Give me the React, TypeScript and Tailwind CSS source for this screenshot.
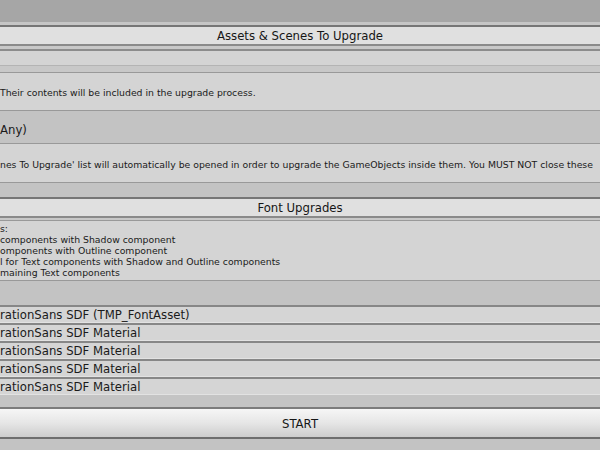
import React from "react";

const materials: string[] = [
  "rationSans SDF (TMP_FontAsset)",
  "rationSans SDF Material",
  "rationSans SDF Material",
  "rationSans SDF Material",
  "rationSans SDF Material",
];

const fontNotes: string[] = [
  "s:",
  "components with Shadow component",
  "omponents with Outline component",
  "l for Text components with Shadow and Outline components",
  "maining Text components",
];

const Header: React.FC<{ title: string }> = ({ title }) => (
  <div className="h-[21px] border-t-2 border-b-2 border-t-[#767676] border-b-[#8a8a8a] bg-[#e0e0e0] flex items-center justify-center pt-[2px] text-[11.7px] text-[#161616]">
    {title}
  </div>
);

const App: React.FC = () => {
  return (
    <div className="w-[600px] h-[450px] overflow-hidden bg-[#c3c3c3] font-['DejaVu_Sans',sans-serif] text-[#1a1a1a] whitespace-nowrap">
      {/* window top */}
      <div className="h-[22px] bg-[#a6a6a6]" />
      <div className="h-[3px] bg-[#c6c6c6]" />

      <Header title="Assets & Scenes To Upgrade" />
      <div className="h-[3px] bg-[#c8c8c8]" />

      {/* empty list field */}
      <div className="h-[17px] border-t-2 border-b border-t-[#8c8c8c] border-b-[#b4b4b4] bg-[#d4d4d4]" />
      <div className="h-[6px] bg-[#c8c8c8]" />

      {/* help box */}
      <div className="h-[39px] border-y border-[#999999] bg-[#d4d4d4] flex items-center text-[9.3px] pt-[3px]">
        <span>Their contents will be included in the upgrade process.</span>
      </div>

      {/* dropdown value */}
      <div className="h-[33px] border-b border-[#999999] bg-[#c3c3c3] flex items-center text-[11.7px] pt-[7px]">
        <span>Any)</span>
      </div>

      <div className="h-[39px] border-b border-[#999999] bg-[#d4d4d4] flex items-center text-[9.3px] pt-[3px]">
        <span>
          nes To Upgrade' list will automatically be opened in order to upgrade the GameObjects inside them. You MUST NOT close these
        </span>
      </div>

      <div className="h-[14px]" />

      <Header title="Font Upgrades" />
      <div className="h-[2px] bg-[#c8c8c8]" />

      {/* font upgrade notes */}
      <div className="h-[61px] border-y border-[#999999] bg-[#d4d4d4] pt-[2px] text-[9.3px] leading-[11px]">
        {fontNotes.map((line, idx) => (
          <div key={idx}>{line}</div>
        ))}
      </div>

      <div className="h-[24px]" />

      {/* material list */}
      <div>
        {materials.map((name, idx) => (
          <div
            key={idx}
            className="h-[18px] border-t-2 border-b border-t-[#878787] border-b-[#e2e2e2] bg-[#d5d5d5] flex items-center pt-[2px] text-[11.7px]"
          >
            {name}
          </div>
        ))}
      </div>

      <div className="h-[12px] bg-[#c4c4c4]" />

      {/* start button */}
      <div className="h-[32px] border-t-2 border-b-2 border-t-[#7c7c7c] border-b-[#6e6e6e] bg-gradient-to-b from-[#f6f6f6] via-[#e6e6e6] to-[#cdcdcd] flex items-center justify-center pt-[3px] text-[11.7px] text-[#161616]">
        START
      </div>
    </div>
  );
};

export default App;
